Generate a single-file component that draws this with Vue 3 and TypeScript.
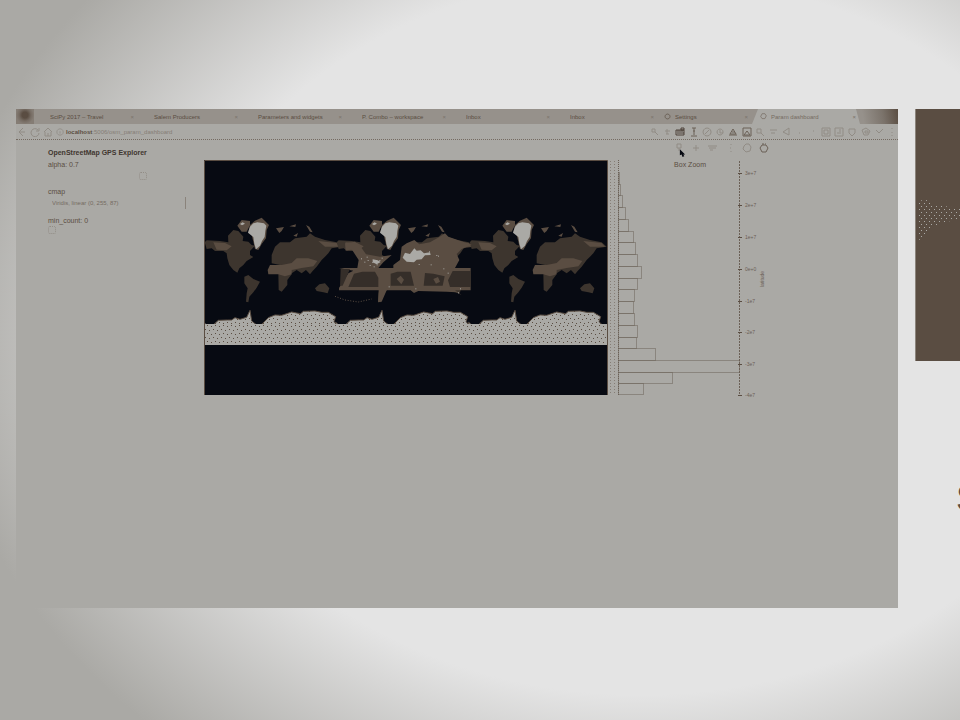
<script setup lang="ts">
interface Tab { title: string; icon?: string; active?: boolean }
interface Icon { name: string; d: string; tone?: string }

const tabs: Tab[] = [
  { title: 'SciPy 2017 – Travel' },
  { title: 'Salem Producers' },
  { title: 'Parameters and widgets' },
  { title: 'P. Combo – workspace' },
  { title: 'Inbox' },
  { title: 'Inbox' },
  { title: 'Settings', icon: 'M5 1.5a3.5 3.5 0 1 0 .1 0z' },
  { title: 'Param dashboard', icon: 'M3 1h4l2 3-2 4H3L1 5z', active: true },
]

const navIcons: Icon[] = [
  { name: 'Back', d: 'M6 1 2 5l4 4M2 5h6' },
  { name: 'Reload', d: 'M8 3a4 4 0 1 0 1 3M9 1v3H6' },
  { name: 'Home', d: 'M1 5 5 1l4 4M2 5v4h6V5M5 6v3' },
]

const extensions: Icon[] = [
  { name: 'Search page', d: 'M3 2h3v3H3zM6 5l3 3' },
  { name: 'Bookmark', d: 'M5 2v5M3 4h5M4 7h3' },
  { name: 'Mail', d: 'M1 3h8v5H1zM2 4h6M2 6h7M6 1h3v2H6z', tone: 'dark' },
  { name: 'Download', d: 'M3 1h4M5 1v7M2 9h6M4 4h2', tone: 'strong' },
  { name: 'Privacy', d: 'M5 1a4 4 0 1 0 .1 0zM3 7l4-4' },
  { name: 'Timer', d: 'M5 2a3 3 0 1 0 .1 0zM5 3v3h3' },
  { name: 'Reader', d: 'M2 7l3-5 3 5zM1 8h8M4 5h3', tone: 'strong' },
  { name: 'Capture', d: 'M1 1h8v8H1zM2 8l3-4 3 4z', tone: 'strong' },
  { name: 'Find', d: 'M2 2h4v4H2zM6 6l3 3' },
  { name: 'Notes', d: 'M2 3h7M3 6h4' },
  { name: 'Share', d: 'M8 1 2 5l6 3z' },
  { name: 'More', d: 'M5 6h1' },
  { name: 'Pin', d: 'M5 4h1' },
  { name: 'Grid', d: 'M1 1h8v8H1zM3 3h4v4H3z' },
  { name: 'Layout', d: 'M1 1h8v8H1zM3 6h4M6 2v3' },
  { name: 'Shield', d: 'M2 2h6v4L5 9 2 6z' },
  { name: 'Badge', d: 'M1 3l4-2 4 3-2 4H3zM4 4h3v2H4z' },
  { name: 'Tag', d: 'M2 3l3 3 4-4' },
  { name: 'Menu', d: 'M5 1v1M5 5v1M5 8v1' },
]

const plotTools: Icon[] = [
  { name: 'Box Zoom', d: 'M3 1h4v4H3zM5 5v3' },
  { name: 'Pan', d: 'M5 2v6M2 5h6' },
  { name: 'Wheel Zoom', d: 'M0 3h9M1 5h7M2 7h3' },
  { name: 'Save', d: 'M6 1v1M5 5h1M6 8v1' },
  { name: 'Reset', d: 'M4 1h3l2 3-1 4-4 1-3-3 1-3z' },
  { name: 'Bokeh', d: 'M3 2h4l2 3-2 4H3L1 5zM3 1h2M6 1h1', tone: 'strong' },
]

// Horizontal extent and top edge of every latitude bin, in plot units
const bins = [
  [12, 12, 1], [24, 11, 2], [35, 12, 4], [47, 12, 7], [59, 12, 10], [71, 11, 15],
  [82, 12, 17], [94, 12, 19], [106, 12, 23], [118, 11, 19], [129, 12, 16],
  [141, 12, 15], [153, 12, 16], [165, 12, 19], [177, 11, 18], [188, 12, 37],
  [200, 12, 121], [212, 11, 54], [223, 11, 25],
].map(([y, h, w]) => ({ y, h, w }))

const ticks = [
  { y: 13, label: '3e+7' }, { y: 45, label: '2e+7' }, { y: 77, label: '1e+7' },
  { y: 109, label: '0e+0' }, { y: 141, label: '-1e7' }, { y: 172, label: '-2e7' },
  { y: 204, label: '-3e7' }, { y: 235, label: '-4e7' },
]

const worlds = [-4, 128, 261].map((x) => `translate(${x} 45) scale(.33333)`)
const traces = [
  [483, 160], [493, 170], [503, 165], [509, 180], [517, 171], [525, 168], [530, 178], [538, 165],
  [545, 158], [692, 178], [730, 190], [743, 203], [709, 150], [714, 152], [646, 250], [566, 244],
  [774, 262], [780, 250], [687, 139], [656, 177], [500, 155], [521, 184],
]
</script>

<template>
  <main class="slide">
    <section class="browser">
      <header class="tabstrip">
        <span class="corner"></span>
        <nav class="tabs">
          <button v-for="(t, i) in tabs" :key="i" type="button" class="tab" :class="{ active: t.active }">
            <svg v-if="t.icon" viewBox="0 0 10 10" class="favicon"><path :d="t.icon" /></svg>
            <span class="tab-title">{{ t.title }}</span>
            <span class="close">×</span>
          </button>
        </nav>
        <span class="profile"></span>
      </header>

      <div class="toolbar">
        <button v-for="n in navIcons" :key="n.name" type="button" class="icon" :aria-label="n.name">
          <svg viewBox="0 0 10 10"><path :d="n.d" /></svg>
        </button>
        <div class="address">
          <svg viewBox="0 0 10 10" class="info"><path d="M5 1a4 4 0 1 0 .1 0zM5 4v3" /></svg>
          <a href="#"><b>localhost</b>:5006/osm_param_dashboard</a>
        </div>
        <div class="extensions">
          <button v-for="e in extensions" :key="e.name" type="button" class="icon" :class="e.tone" :aria-label="e.name">
            <svg viewBox="0 0 10 10"><path :d="e.d" /></svg>
          </button>
        </div>
      </div>

      <div class="content">
        <aside class="sidebar">
          <h1>OpenStreetMap GPS Explorer</h1>
          <label for="alpha" class="alpha-label">alpha: 0.7</label>
          <input id="alpha" type="range" min="0" max="1" step="0.1" value="0.7" />
          <label for="cmap" class="cmap-label">cmap</label>
          <select id="cmap">
            <option>Viridis, linear (0, 255, 87)</option>
          </select>
          <label for="count" class="count-label">min_count: 0</label>
          <input id="count" type="range" min="0" max="10" value="0" />
        </aside>

        <div class="plot">
          <div class="plot-tools">
            <button v-for="p in plotTools" :key="p.name" type="button" class="icon" :class="p.tone" :aria-label="p.name">
              <svg viewBox="0 0 10 10"><path :d="p.d" /></svg>
            </button>
            <svg class="cursor" viewBox="0 0 8 10"><path d="M1 0v7l2-1 1 3 2-1-1-2h2z" /></svg>
            <span class="tooltip">Box Zoom</span>
          </div>

          <svg class="chart" viewBox="0 0 566 242">
            <defs>
              <pattern id="ice" width="8" height="8" patternUnits="userSpaceOnUse">
                <rect width="8" height="8" fill="#aaa9a5" />
                <path d="M1 1h1v1H1zM5 2h1v1H5zM3 5h1v1H3zM7 6h1v1H7z" />
              </pattern>
              <pattern id="antarctica" width="24" height="24" patternUnits="userSpaceOnUse">
                <rect width="24" height="24" fill="#aaa9a5" />
                <path d="M3 3h3v3H3zM15 6h3v3h-3zM9 15h3v3H9zM21 18h3v3h-3z" />
              </pattern>
              <clipPath id="frame"><rect width="403" height="235" /></clipPath>
              <g id="continents">
                <path class="ground" d="M14 112 20 106 60 108 85 112 84 92 100 75 115 78 130 95 128 108 145 110 155 120 165 122 150 138 150 150 160 156 140 168 130 180 118 190 112 203 100 195 88 180 82 160 80 145 70 138 45 138 35 130 20 132zM133 215 145 210 160 222 180 230 170 248 160 262 148 275 145 292 138 290 140 265 143 250 133 235zM215 150 225 125 240 112 270 112 285 100 320 95 330 85 345 95 375 105 410 112 425 125 395 130 385 145 375 155 365 165 350 185 338 198 330 208 318 195 305 205 290 195 275 205 262 185 240 180 215 175zM235 205 275 208 262 225 262 240 245 260 236 255zM345 250 358 238 375 235 388 250 383 265 370 262 350 258z" />
                <path class="earth" d="M203 195 210 180 245 180 275 174 290 160 325 160 352 168 340 184 305 189 275 195 275 208 255 214 235 208 205 208zM112 62 125 45 150 48 150 60 140 80 125 80zM228 70 252 66 245 78 238 84zM268 64 288 58 286 66zM318 60 328 65 338 82 330 80zM280 92 294 84 290 95zM40 112 75 114 95 124 80 136 50 134zM355 108 410 114 420 125 375 125zM150 60 165 47 185 38 195 48 207 60 200 75 198 100 185 117 175 135 165 132 160 110 155 90 145 80z" />
                <path class="snow" d="M150 65 160 55 172 52 192 55 199 62 196 78 194 96 186 108 180 122 168 133 163 116 160 96 144 83zM120 57 128 52 135 56 126 61z" />
                <path class="antarctic" d="M11 352 25 364 42 358 55 346 82 345 95 345 105 338 120 343 140 337 150 316 155 348 170 360 185 358 205 338 225 330 245 331 275 321 290 324 302 326 310 319 345 318 365 322 385 322 407 335 402 350 412 360V420H0z" />
              </g>
            </defs>

            <g clip-path="url(#frame)">
              <rect width="403" height="235" fill="#070a12" />
              <use v-for="w in worlds" :key="w" href="#continents" :transform="w" />
              <g transform="translate(-4 45) scale(.33333)">
                <path class="earth" d="M435 115 465 110 480 122 498 148 540 155 575 150 550 172 535 189H812V256H765L785 270 768 262 740 260 655 258 642 264 632 256H560L545 290 534 292 536 256H417V249L445 205 460 197 417 189H472L476 165 455 133 437 137zM580 180 600 165 605 125 620 115 643 105 658 118 690 112 718 96 735 85 745 95 815 119 785 132 770 147 778 165 765 189H580z" />
                <path class="dusk" d="M462 206 487 200h38l10 18v28h-90zM572 206l20-6h40l10 42h-70zM675 204 700 206l34 8-6 28h-57zM422 192h28l-22 50h-8zM758 198h54v48h-62l-6-20z" />
                <path class="earth" d="M590 222l12-10 10 12-8 14zM700 222l14-6 6 14-12 6z" />
                <path class="snow" d="M608 158 615 143 630 147 643 130 650 137 662 136 672 145 690 142 692 150 675 151 665 163 650 164 642 172 620 170zM518 163 533 166 542 171 530 178 518 172z" />
                <path class="route" d="M405 274 435 285 475 291 515 282" />
                <rect v-for="([x, y], i) in traces" :key="i" :x="x" :y="y" width="3" height="3" fill="#aaa9a5" />
              </g>
              <rect y="164" width="403" height="21" fill="url(#ice)" />
              <rect y="185" width="403" height="50" fill="#070a12" />
            </g>
            <path class="edge" d="M.5 235V.5H403.500V235" />

            <path class="guide" d="M406.500 1V235M410.500 1V235" />
            <g class="bars" transform="translate(414 0)">
              <path d="M.5 0V235" />
              <rect v-for="b in bins" :key="b.y" x="0.5" :y="b.y + 0.5" :width="b.w" :height="b.h" />
            </g>
            <g class="axis">
              <path class="spine" d="M535.500 1V236" />
              <g v-for="t in ticks" :key="t.y">
                <path :d="`M534 ${t.y + 0.5}h4`" />
                <text x="541" :y="t.y + 2">{{ t.label }}</text>
              </g>
              <text transform="translate(560 127) rotate(-90)">latitude</text>
            </g>
          </svg>
        </div>
      </div>
    </section>

    <section class="next-slide">
      <svg class="picture" viewBox="0 0 46 252" preserveAspectRatio="xMinYMin slice">
        <defs>
          <pattern id="spray" width="5" height="6" patternUnits="userSpaceOnUse">
            <path class="speck" d="M1 1h1v1H1zM4 4h1v1H4z" />
          </pattern>
        </defs>
        <rect width="80" height="252" fill="#5a4d42" />
        <rect width="1" height="252" fill="#8b847c" />
        <path class="spray" d="M2 93Q12 88 20 96L46 99V112Q24 110 14 122L2 133z" />
      </svg>
      <p>S</p>
    </section>
  </main>
</template>

<style>
body {
  margin: 0;
  background: #aaa9a5;
}
</style>

<style scoped>
.slide {
  box-sizing: border-box;
  display: flex;
  align-items: flex-start;
  gap: 17px;
  min-height: 100vh;
  padding: 109px 0 0 16px;
  overflow: hidden;
  background: radial-gradient(ellipse 48% 50% at 66.7% 46.5%, #e4e4e4 0 100%, #aaa9a5 152%);
  font-family: "Liberation Sans", Arial, sans-serif;
  font-size: 6px;
  color: #5a4d42;
}
.browser {
  flex: none;
  width: calc(100vw - 78px);
  min-height: 499px;
  background: #aaa9a5;
}
button {
  padding: 0;
  border: 0;
  background: none;
  color: inherit;
  font: inherit;
}
svg {
  display: block;
}
path {
  fill: none;
  stroke: currentColor;
}
.tabstrip {
  display: flex;
  height: 15px;
  background: #96918b;
}
.corner {
  flex: none;
  width: 18px;
  background: radial-gradient(circle at 9px 6px, #5a4d42 3px, #756b62 6px, #857d75 9px);
}
.tabs {
  display: flex;
  flex: 1;
}
.tab {
  display: flex;
  flex: 1;
  align-items: center;
  gap: 4px;
  min-width: 0;
  padding: 0 4px 0 16px;
  text-align: left;
}
.tab:has(.favicon) {
  padding-left: 6px;
}
.tab.active {
  flex: 0 0 108px;
  padding-left: 8px;
  background: #aaa9a5;
  color: #756b62;
  clip-path: polygon(6px 0, calc(100% - 4px) 0, 100% 100%, 0 100%);
}
.tab-title {
  flex: 1;
  overflow: hidden;
  white-space: nowrap;
}
.close {
  color: #7b736b;
}
.favicon {
  width: 7px;
  height: 7px;
}
.profile {
  flex: none;
  width: 38px;
  background: linear-gradient(80deg, #96918b 10%, #7b736b 60%, #5a4d42);
}
.toolbar {
  display: flex;
  align-items: center;
  gap: 3px;
  height: 15px;
  padding: 0 1px;
  border-bottom: 1px dotted #756b62;
}
.icon {
  flex: none;
  width: 10px;
  height: 10px;
  color: #918c85;
}
.icon.strong {
  color: #6b6056;
}
.icon.dark {
  color: #4c4038;
}
.address {
  display: flex;
  flex: 1;
  align-items: center;
  gap: 2px;
}
.info {
  width: 8px;
  height: 8px;
  color: #918c85;
}
.address a {
  color: #857d75;
  text-decoration: none;
}
.address b {
  color: #5a4d42;
}
.extensions {
  display: flex;
  justify-content: space-between;
  width: 248px;
}
.content {
  display: flex;
  padding: 0 128px 0 32px;
}
.sidebar {
  display: flex;
  flex: none;
  flex-direction: column;
  width: 138px;
  padding: 8px 18px 0 0;
}
h1 {
  margin: 0;
  font-size: 7px;
  line-height: 9px;
  color: #40362f;
  white-space: nowrap;
}
label {
  font-size: 7px;
  line-height: 8px;
}
.alpha-label {
  margin-top: 4px;
}
.cmap-label {
  margin-top: 8px;
}
.count-label {
  margin-top: 8px;
}
input[type="range"] {
  height: 9px;
  margin: 0;
  appearance: none;
  background: transparent;
}
#alpha {
  margin-top: 2px;
}
input[type="range"]::-webkit-slider-thumb {
  width: 8px;
  height: 8px;
  appearance: none;
  border: 1px dotted #918c85;
  border-radius: 2px;
}
select {
  height: 12px;
  margin-top: 1px;
  padding: 0 4px;
  appearance: none;
  border: 0;
  border-right: 1px solid #8a837b;
  border-radius: 0;
  background: transparent;
  color: #756b62;
  font: inherit;
}
.plot {
  flex: 1;
  min-width: 0;
}
.plot-tools {
  position: relative;
  display: flex;
  justify-content: flex-end;
  gap: 7px;
  height: 17px;
  padding: 3px 1px 0 0;
}
.cursor {
  position: absolute;
  top: 9px;
  right: 84px;
  width: 7px;
  height: 9px;
}
.cursor path {
  fill: #070a12;
  stroke: none;
}
.tooltip {
  position: absolute;
  top: 21px;
  right: 64px;
  font-size: 7px;
  line-height: 8px;
}
.chart {
  width: 100%;
}
.chart .ground {
  fill: #3d352e;
  stroke: none;
}
.chart .earth {
  fill: #5a4d42;
  stroke: none;
}
.chart .snow {
  fill: #aaa9a5;
  stroke: none;
}
.chart .dusk {
  fill: #352e29;
  stroke: none;
}
.chart .antarctic {
  fill: url(#antarctica);
  stroke: #5a4d42;
  stroke-width: 3px;
}
.chart .route {
  stroke: #5a4d42;
  stroke-width: 3px;
  stroke-dasharray: 3 5;
}
.edge {
  stroke: #5a4d42;
}
.guide {
  stroke: #857d75;
  stroke-dasharray: 1 2;
}
.bars rect,
.bars path {
  fill: none;
  stroke: #6b6056;
  stroke-dasharray: 1 1;
}
.axis .spine {
  stroke: #6b6056;
  stroke-dasharray: 2 1;
}
.axis text {
  fill: #6b6056;
  font-size: 5px;
}
pattern path {
  fill: #5a4d42;
  stroke: none;
}
pattern .speck {
  fill: #aaa9a5;
}
.picture .spray {
  fill: url(#spray);
  stroke: none;
}
.next-slide {
  flex: none;
  width: 46px;
}
.picture {
  width: 46px;
  height: 252px;
}
.next-slide p {
  margin: 0;
  padding: 120px 0 0 41px;
  font-size: 36px;
  line-height: 36px;
}
</style>
